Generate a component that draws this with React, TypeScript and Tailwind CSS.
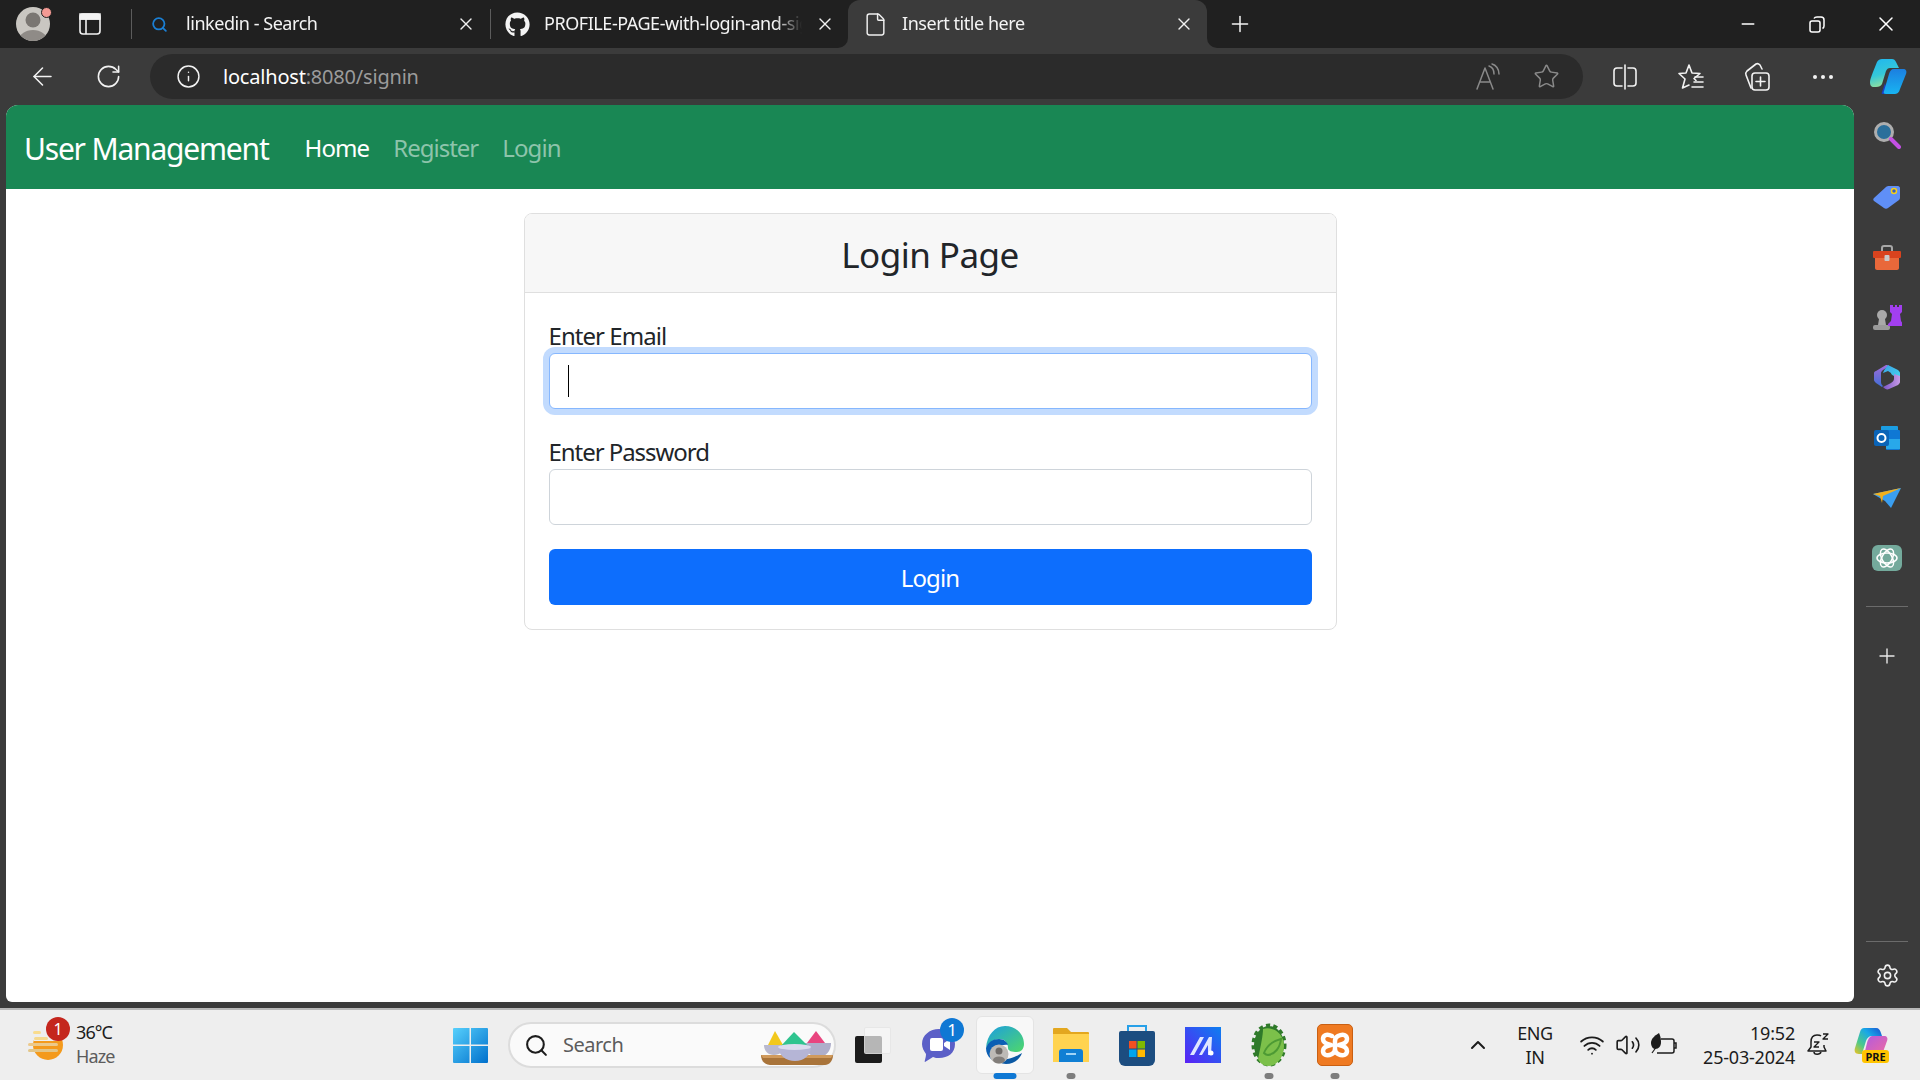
import React from "react";
import { FaGithub } from "react-icons/fa";
import { ArrowLeft, Info, Minus, Plus, RotateCw, Search, Settings, Star, X, ChevronUp, Volume2, Wifi, File } from "lucide-react";

function Slot({ w, children }: { w: string; children?: React.ReactNode }) {
  return <div className={`${w} h-full shrink-0 flex items-center justify-center relative`}>{children}</div>;
}

function Tab({ icon, title, iconW, active }: { icon: React.ReactNode; title: string; iconW: string; active?: boolean }) {
  return (
    <div className={`relative h-full flex items-center ${active ? "w-[359px] bg-[#3b3b3b] rounded-t-[12px]" : "w-[357px]"}`}>
      {active && (
        <>
          <span className="absolute left-[-10px] bottom-0 w-[10px] h-[10px] bg-[#3b3b3b]"><span className="block w-full h-full bg-[#202020] rounded-br-[10px]" /></span>
          <span className="absolute right-[-10px] bottom-0 w-[10px] h-[10px] bg-[#3b3b3b]"><span className="block w-full h-full bg-[#202020] rounded-bl-[10px]" /></span>
        </>
      )}
      <div className={`${iconW} shrink-0 flex justify-center`}>{icon}</div>
      <div className="flex-1 overflow-hidden whitespace-nowrap pb-[2px] text-[18px] tracking-[-0.45px] text-[#f4f4f4] [mask-image:linear-gradient(to_right,black_90%,transparent)]">{title}</div>
      <div className="w-[46px] shrink-0 flex justify-center"><X size={20} strokeWidth={1.6} className="text-[#f0f0f0]" /></div>
    </div>
  );
}

function Profile({ size }: { size: number }) {
  return (
    <svg width={size} height={size} viewBox="0 0 34 34">
      <defs><clipPath id={`pc${size}`}><circle cx="17" cy="17" r="17" /></clipPath></defs>
      <g clipPath={`url(#pc${size})`}>
        <rect width="34" height="34" fill="#c9c6c1" />
        <circle cx="17" cy="13" r="7.5" fill="#7a7672" />
        <ellipse cx="17" cy="33" rx="14" ry="10" fill="#8f8b87" />
      </g>
    </svg>
  );
}

function Copilot({ size }: { size: number }) {
  return (
    <svg width={size} height={size} viewBox="0 0 38 38">
      <defs>
        <linearGradient id="cpa" x1="0" y1="0" x2="0.3" y2="1"><stop offset="0" stopColor="#1fb6f0" /><stop offset="0.6" stopColor="#35c8d8" /><stop offset="1" stopColor="#8fe0a0" /></linearGradient>
        <linearGradient id="cpb" x1="0" y1="0" x2="0" y2="1"><stop offset="0" stopColor="#1c7fe0" /><stop offset="1" stopColor="#18b4f2" /></linearGradient>
      </defs>
      <path d="M16 25l-3 9c-1 2 0 2 2 2h7l-4-3z" fill="#1a3fc4" />
      <path d="M13 1h10c2 0 3 1 4 3l3 6h-9c-2 0-3 1-4 3l-4 13c-1 2-3 3-6 3H5c-3 0-4-2-4-5 0-2 1-5 3-10l4-10c1-2 3-3 5-3z" fill="url(#cpa)" />
      <path d="M25 11h9c3 0 4 2 3 5l-6 15c-1 4-3 5-6 5h-8c-2 0-3-1-2-3l5-17c1-3 2-5 5-5z" fill="url(#cpb)" />
    </svg>
  );
}

function ReadAloud() {
  return (
    <svg width="26" height="28" viewBox="0 0 26 28" fill="none" stroke="#8a8a8a" strokeWidth="1.5" strokeLinecap="round" strokeLinejoin="round">
      <path d="M2 26L10 5l8 21M5 19h10" />
      <path d="M14 3c3 1 5 4 5 8M17 1c4 1 7 5 7 10" />
    </svg>
  );
}

function SplitScreen() {
  return (
    <svg width="24" height="26" viewBox="0 0 24 26" fill="none" stroke="#f2f2f2" strokeWidth="1.6" strokeLinecap="round">
      <path d="M9 4H4a3 3 0 0 0-3 3v12a3 3 0 0 0 3 3h5M15 4h5a3 3 0 0 1 3 3v12a3 3 0 0 1-3 3h-5M12 1v24" />
    </svg>
  );
}

function Favorites() {
  return (
    <svg width="26" height="28" viewBox="0 0 26 28" fill="none" stroke="#f2f2f2" strokeWidth="1.6" strokeLinecap="round" strokeLinejoin="round">
      <path d="M11 2l3 8 8 .5-6 5 2 2M11 2L8 10l-7 .5 6 5.5-2.500 9L11 22" />
      <path d="M17 14h8M16 19h9M14 24h11" />
    </svg>
  );
}

function Collections() {
  return (
    <svg width="26" height="30" viewBox="0 0 26 30" fill="none" stroke="#f2f2f2" strokeWidth="1.6" strokeLinecap="round" strokeLinejoin="round">
      <path d="M7 26L2 13c-1-2 0-3 1-4l9-7c2-1 3 0 4 1l2 4" />
      <rect x="8" y="11" width="17" height="17" rx="3" />
      <path d="M16.500 15v9M12 19.500h9" />
    </svg>
  );
}

function SideIcon({ children, h }: { children: React.ReactNode; h: string }) {
  return <div className={`${h} w-full shrink-0 flex items-center justify-center`}>{children}</div>;
}

function Sidebar() {
  return (
    <div className="w-[66px] h-full flex flex-col items-center pt-[1px]">
      <SideIcon h="h-[60px]">
        <svg width="28" height="30" viewBox="0 0 28 30"><circle cx="11" cy="11" r="8.500" fill="#2b6f9b" stroke="#aeaeae" strokeWidth="3" /><path d="M18 18l8 8" stroke="#c450e4" strokeWidth="4" strokeLinecap="round" /></svg>
      </SideIcon>
      <SideIcon h="h-[62px]">
        <svg width="28" height="26" viewBox="0 0 28 26"><path d="M1 14L13 3c1-1 2-1 3-1h9c1 0 2 1 2 2v9c0 1 0 2-1 3L15 24c-1 1-3 1-4 0L1 17c-1-1-1-2 0-3z" fill="#5f8ff7" /><circle cx="21" cy="7" r="2.500" fill="#3a5fc0" stroke="#f5cf1a" strokeWidth="1.500" /></svg>
      </SideIcon>
      <SideIcon h="h-[60px]">
        <svg width="28" height="26" viewBox="0 0 28 26"><path d="M9 6V3c0-1 1-2 2-2h6c1 0 2 1 2 2v3" fill="none" stroke="#a7a7a7" strokeWidth="2" /><rect x="0" y="6" width="28" height="7" rx="1" fill="#d9431e" /><path d="M2 13h24v10c0 1-1 2-2 2H4c-1 0-2-1-2-2z" fill="#e9683a" /><rect x="11.500" y="10" width="5" height="6" rx="1" fill="#c9c9c9" /></svg>
      </SideIcon>
      <SideIcon h="h-[58px]">
        <svg width="30" height="28" viewBox="0 0 30 28"><circle cx="10" cy="12" r="5" fill="#a9a9a9" /><path d="M7 16h6l1 6H6z" fill="#a9a9a9" /><rect x="1" y="22" width="17" height="5" rx="2" fill="#9a9a9a" /><path d="M18 2h3v2h2V2h2v2h2V2h3v7l-2 2 1 7 2 3v2H16v-2l3-3 1-7-2-2z" fill="#a23ff0" /></svg>
      </SideIcon>
      <SideIcon h="h-[62px]">
        <svg width="26" height="26" viewBox="0 0 26 26">
          <defs>
            <linearGradient id="of1" x1="0" y1="0" x2="0" y2="1"><stop offset="0" stopColor="#a26bd8" /><stop offset="1" stopColor="#3f6fd8" /></linearGradient>
            <linearGradient id="of2" x1="0" y1="0" x2="1" y2="1"><stop offset="0" stopColor="#3aa0e8" /><stop offset="1" stopColor="#46d6ec" /></linearGradient>
            <linearGradient id="of3" x1="0" y1="0" x2="1" y2="0"><stop offset="0" stopColor="#7b55c8" /><stop offset="1" stopColor="#c79ae6" /></linearGradient>
          </defs>
          <path d="M2 7l10-6c1 0 2 0 3 1L9 6c-1 1-2 2-2 3v9c0 2 1 3 2 4l-1 1-6-4c-1-1-2-2-2-3V9c0-1 1-2 2-2z" fill="url(#of1)" />
          <path d="M14 1l10 5c1 1 2 2 2 3v6l-6-3c-2-1-3-2-3-3l-3-2-5 2c1-3 3-6 5-8z" fill="url(#of2)" />
          <path d="M26 12v6c0 1-1 2-2 3l-9 4c-2 1-4 0-6-2l8-4c1-1 3-2 3-4v-5z" fill="url(#of3)" />
        </svg>
      </SideIcon>
      <SideIcon h="h-[60px]">
        <svg width="26" height="24" viewBox="0 0 26 24"><rect x="7" y="0" width="17" height="12" rx="1" fill="#1b9de2" /><rect x="12" y="4" width="14" height="20" rx="1" fill="#0f78d4" /><path d="M12 13l14 0v10H12z" fill="#28a8ea" /><rect x="0" y="4" width="15" height="16" rx="2" fill="#0a64b8" /><circle cx="7.500" cy="12" r="4" fill="none" stroke="#fff" strokeWidth="2" /></svg>
      </SideIcon>
      <SideIcon h="h-[60px]">
        <svg width="28" height="20" viewBox="0 0 28 20"><path d="M0 6l28-6-10 20-6-7z" fill="#3a9eef" /><path d="M0 6l28-6-18 8-1 7-2-7z" fill="#f2b01c" /></svg>
      </SideIcon>
      <SideIcon h="h-[60px]">
        <div className="w-[30px] h-[26px] rounded-[6px] bg-[#74aa9c] flex items-center justify-center">
          <svg width="24" height="24" viewBox="0 0 24 24" fill="none" stroke="#fff" strokeWidth="1.500">
            <ellipse cx="12" cy="12" rx="10" ry="5" />
            <ellipse cx="12" cy="12" rx="10" ry="5" transform="rotate(60 12 12)" />
            <ellipse cx="12" cy="12" rx="10" ry="5" transform="rotate(120 12 12)" />
          </svg>
        </div>
      </SideIcon>
      <div className="w-[42px] h-px bg-[#6b6b6b] mt-[18px] mb-[37px]" />
      <Plus size={24} strokeWidth={1.4} className="text-[#e8e8e8]" />
      <div className="flex-1" />
      <div className="w-[42px] h-px bg-[#6b6b6b]" />
      <div className="h-[66px] flex items-center"><Settings size={25} strokeWidth={1.5} className="text-[#f2f2f2]" /></div>
    </div>
  );
}

function Holi() {
  return (
    <svg width="72" height="34" viewBox="0 0 72 34">
      <path d="M7 14L14 0l8 14z" fill="#f2c81c" />
      <path d="M46 12L55 0l9 12z" fill="#e8457f" />
      <path d="M3 14h20c0 6-4 10-10 10S3 20 3 14z" fill="#b9b9cf" />
      <path d="M44 12h26c0 8-5 14-13 14s-13-6-13-14z" fill="#aeaeca" />
      <path d="M0 24h72c0 6-4 10-8 10H9c-5 0-9-4-9-10z" fill="#a9743a" />
      <path d="M0 24h72l-2 3H2z" fill="#d09a5c" />
      <path d="M19 16L33 1l15 15z" fill="#2fc48f" />
      <path d="M17 15h33c0 9-7 15-16 15S17 24 17 15z" fill="#b5b5d6" />
      <ellipse cx="33.500" cy="16" rx="16.500" ry="3" fill="#dcdcee" />
    </svg>
  );
}

function Bar({ w, children }: { w: string; children?: React.ReactNode }) {
  return <div className={`${w} h-full shrink-0 flex items-center justify-center relative`}>{children}</div>;
}

function Dot() {
  return <span className="absolute bottom-[1px] left-1/2 -translate-x-1/2 w-[9px] h-[6px] rounded-full bg-[#7d7d7d]" />;
}

function Taskbar() {
  return (
    <div className="h-[70px] bg-[#eeeeee] flex items-center shrink-0">
      <div className="relative w-[76px] h-full shrink-0 flex items-center pl-[28px]">
        <svg width="36" height="36" viewBox="0 0 36 36">
          <circle cx="20" cy="18" r="15" fill="#f49a1c" />
          <rect x="6" y="2" width="24" height="12" fill="#eeeeee" />
          <rect x="5" y="4" width="8" height="3" rx="1.500" fill="#f9dc8e" />
          <rect x="6" y="10" width="14" height="3" rx="1.500" fill="#f5d98e" />
          <rect x="0" y="16" width="30" height="3" rx="1.500" fill="#ecc98a" />
          <rect x="0" y="22" width="30" height="3" rx="1.500" fill="#e3c688" />
        </svg>
        <span className="absolute left-[46px] top-[7px] w-[24px] h-[24px] rounded-full bg-[#c4261d] text-white text-[16px] leading-[24px] text-center">1</span>
      </div>
      <div className="w-[358px] shrink-0 text-[18px] tracking-[-0.9px] leading-[24px] -translate-y-[1px]">
        <div className="text-[#1c1c1c]">36°C</div>
        <div className="text-[#5c5c5c]">Haze</div>
      </div>
      <Bar w="w-[72px]">
        <svg width="35" height="35" viewBox="0 0 35 35">
          <defs>
            <linearGradient id="wn" x1="0" y1="0" x2="1" y2="1"><stop offset="0" stopColor="#57d0fc" /><stop offset="1" stopColor="#0070cc" /></linearGradient>
          </defs>
          <path d="M1 0h15.500v16.500H0V1a1 1 0 0 1 1-1zM18 0h16a1 1 0 0 1 1 1v15.500H18zM0 18h16.500v17H1a1 1 0 0 1-1-1zM18 18h17v16a1 1 0 0 1-1 1H18z" fill="url(#wn)" />
        </svg>
      </Bar>
      <div className="w-[2px] shrink-0" />
      <div className="w-[328px] h-[46px] shrink-0 rounded-full bg-[#fafafa] border-[2px] border-[#dcdcdc] flex items-center relative">
        <Search size={25} strokeWidth={2} className="ml-[14px] text-[#1c1c1c]" />
        <span className="ml-[14px] text-[20px] tracking-[-0.5px] text-[#5c5c5c]">Search</span>
        <div className="absolute right-[1px] bottom-[1px]"><Holi /></div>
      </div>
      <div className="w-[4px] shrink-0" />
      <Bar w="w-[66px]">
        <div className="relative w-[36px] h-[36px]">
          <div className="absolute left-0 bottom-0 w-[27px] h-[27px] rounded-[2px] bg-[#1b1b1b]" />
          <div className="absolute right-0 top-0 w-[27px] h-[27px] rounded-[2px] bg-[#f8f8f8]/70 border border-[#dddddd]/60" />
        </div>
      </Bar>
      <Bar w="w-[66px]">
        <svg width="36" height="38" viewBox="0 0 36 38">
          <path d="M18 3c9 0 16 6 16 15s-7 14-16 14c-2 0-4 0-6-1l-8 5c-1 0 1-4 1-8-2-3-4-6-4-10C1 9 9 3 18 3z" fill="#5b5fc7" />
          <rect x="9" y="12" width="13" height="13" rx="2" fill="#fff" />
          <path d="M23 17l6-4v11l-6-4z" fill="#fff" />
        </svg>
        <span className="absolute left-[34px] top-[8px] w-[24px] h-[24px] rounded-full bg-[#0f78d4] text-white text-[17px] leading-[24px] text-center">1</span>
      </Bar>
      <Bar w="w-[66px]">
        <div className="absolute left-[4px] top-[6px] w-[58px] h-[58px] rounded-[6px] bg-[#f8f8f8] border border-[#e4e4e4]" />
        <svg className="relative" width="38" height="38" viewBox="0 0 38 38">
          <defs>
            <linearGradient id="ed1" x1="0" y1="0" x2="1" y2="1"><stop offset="0" stopColor="#1b9de2" /><stop offset="1" stopColor="#4fd86a" /></linearGradient>
          </defs>
          <path d="M19 0c11 0 19 8 19 18 0 5-3 8-7 8-5 0-9-1-9-4 0-5-3-9-8-9-7 0-12 4-14 9C1 9 9 0 19 0z" fill="url(#ed1)" />
          <path d="M0 22c2-6 7-9 13-9 5 0 8 3 9 6-6-1-13 2-13 9 0 4 2 7 6 9C7 36 0 31 0 22z" fill="#0b5fb4" />
          <path d="M36 27c-2 6-8 11-16 11-5 0-9-3-10-8 4 4 12 6 26-3z" fill="#0c59a4" />
          <circle cx="13" cy="28" r="9.500" fill="#bdbab6" />
          <circle cx="13" cy="25" r="3.500" fill="#6f6b68" />
          <ellipse cx="13" cy="34" rx="6" ry="3.500" fill="#827e7a" />
        </svg>
        <span className="absolute bottom-[1px] left-1/2 -translate-x-1/2 w-[23px] h-[6px] rounded-full bg-[#0f78d4]" />
      </Bar>
      <Bar w="w-[66px]">
        <svg width="36" height="34" viewBox="0 0 36 34">
          <path d="M1 0h13l4 4h17a1 1 0 0 1 1 1v28H0V1a1 1 0 0 1 1-1z" fill="#e3a71f" />
          <rect x="0" y="6" width="36" height="28" fill="#ffd350" />
          <path d="M6 24c0-2 1-3 3-3h18c2 0 3 1 3 3v10H6z" fill="#0f7fd4" />
          <rect x="13" y="25" width="10" height="2" fill="#9fd4f7" />
        </svg>
        <Dot />
      </Bar>
      <Bar w="w-[66px]">
        <svg width="36" height="42" viewBox="0 0 36 42">
          <path d="M9 8V2h18v6" fill="none" stroke="#27a0e8" strokeWidth="2" />
          <path d="M0 9a2 2 0 0 1 2-2h32a2 2 0 0 1 2 2v27a6 6 0 0 1-6 6H6a6 6 0 0 1-6-6z" fill="#1c4d80" />
          <rect x="10" y="17" width="7.500" height="7.500" fill="#f25022" />
          <rect x="18.500" y="17" width="7.500" height="7.500" fill="#7fba00" />
          <rect x="10" y="25.500" width="7.500" height="7.500" fill="#00a4ef" />
          <rect x="18.500" y="25.500" width="7.500" height="7.500" fill="#ffb900" />
        </svg>
      </Bar>
      <Bar w="w-[66px]">
        <svg width="36" height="36" viewBox="0 0 36 36">
          <defs>
            <linearGradient id="mz" x1="0" y1="1" x2="1" y2="0"><stop offset="0" stopColor="#5b21f5" /><stop offset="1" stopColor="#0d7ff0" /></linearGradient>
          </defs>
          <rect width="36" height="36" fill="url(#mz)" />
          <path d="M5 28L15 10h4L9 28zM14 28L24 10h3l-1 18h-3l0-10-6 10z" fill="#dfe6ff" />
          <circle cx="26" cy="26" r="2.500" fill="#fff" />
        </svg>
      </Bar>
      <Bar w="w-[66px]">
        <svg width="36" height="44" viewBox="0 0 36 44">
          <ellipse cx="18" cy="22" rx="15" ry="19" fill="#2f7a2a" stroke="#2f7a2a" strokeWidth="5" strokeDasharray="4 3" />
          <path d="M12 6c10-3 21 4 21 17 0 11-7 20-15 20-6 0-9-3-11-7 3-14 5-24 5-30z" fill="#7cc04a" />
          <path d="M13 30c3-8 9-12 17-14-1 9-6 15-13 16-2 0-3-1-4-2z" fill="none" stroke="#4d9a34" strokeWidth="2" />
        </svg>
        <Dot />
      </Bar>
      <Bar w="w-[66px]">
        <div className="w-[36px] h-[42px] rounded-[5px] bg-[#ef7a22] border border-[#c95f12] flex items-center justify-center">
          <svg width="30" height="30" viewBox="0 0 30 30" fill="none" stroke="#fff" strokeWidth="4.500" strokeLinecap="round" strokeLinejoin="round">
            <path d="M12 6C6 3 3 6 3 9c0 3 3 5 8 6-5 1-8 3-8 6 0 3 3 6 9 3 2-1 3-3 3-5v-8c0-2 1-4 3-5 6-3 9 0 9 3 0 3-3 5-8 6 5 1 8 3 8 6 0 3-3 6-9 3-2-1-3-3-3-5" />
          </svg>
        </div>
        <Dot />
      </Bar>
      <div className="w-[90px] shrink-0" />
      <Bar w="w-[40px]"><ChevronUp size={24} strokeWidth={2} className="text-[#1c1c1c]" /></Bar>
      <Bar w="w-[74px]">
        <div className="text-[18px] leading-[24px] tracking-[-0.5px] text-center text-[#1c1c1c]"><div>ENG</div><div>IN</div></div>
      </Bar>
      <div className="w-[2px] shrink-0" />
      <Bar w="w-[36px]"><Wifi size={26} strokeWidth={1.7} className="text-[#1c1c1c]" /></Bar>
      <Bar w="w-[36px]"><Volume2 size={26} strokeWidth={1.5} className="text-[#1c1c1c]" /></Bar>
      <Bar w="w-[36px]">
        <svg width="26" height="24" viewBox="0 0 26 24" fill="none" stroke="#1c1c1c" strokeWidth="1.500">
          <path d="M10 6h11a2 2 0 0 1 2 2v10a2 2 0 0 1-2 2H6M23 10h2v5h-2" />
          <path d="M8 0C3 3 0 6 0 10c0 3 2 6 4 6 4 0 6-3 6-7 0-4-1-7-2-9z" fill="#1c1c1c" stroke="none" />
          <path d="M6 13l-5 7" strokeWidth="1.200" />
        </svg>
      </Bar>
      <div className="w-[113px] shrink-0 text-right text-[18px] tracking-[-0.2px] leading-[24px] text-[#1c1c1c]">
        <div>19:52</div>
        <div>25-03-2024</div>
      </div>
      <Bar w="w-[46px]">
        <svg width="22" height="24" viewBox="0 0 22 24" fill="none" stroke="#1c1c1c" strokeWidth="1.500" strokeLinejoin="round">
          <path d="M14 3c-1-1-2-1-4-1C6 2 4 5 4 9v5l-3 4h18l-2-4v-2" />
          <path d="M7 19c0 3 6 3 7 0" />
          <path d="M7 9h5l-5 5h5M16 1h5l-5 5h5" strokeWidth="1.300" />
        </svg>
      </Bar>
      <Bar w="w-[60px]">
        <div className="relative w-[34px] h-[36px]">
          <svg width="34" height="28" viewBox="0 0 34 28">
            <defs>
              <linearGradient id="cp2" x1="0" y1="1" x2="1" y2="0"><stop offset="0" stopColor="#f4c21c" /><stop offset="0.3" stopColor="#4dc98a" /><stop offset="0.65" stopColor="#18a7e8" /><stop offset="1" stopColor="#1a4fd0" /></linearGradient>
              <linearGradient id="cp3" x1="0" y1="0" x2="1" y2="1"><stop offset="0" stopColor="#b15be0" /><stop offset="1" stopColor="#f06aa0" /></linearGradient>
            </defs>
            <path d="M10 1h12c3 0 4 2 5 5l1 3H18c-3 0-5 2-6 5l-4 13H5c-4 0-5-3-4-6L6 5c1-3 2-4 4-4z" fill="url(#cp2)" />
            <path d="M18 9h12c3 0 4 2 3 5l-4 11c-1 2-2 3-5 3H10l3-12c1-4 3-7 5-7z" fill="url(#cp3)" />
          </svg>
          <span className="absolute left-[8px] top-[23px] w-[27px] h-[13px] rounded-[3px] bg-[#ffc400] text-[#111] text-[11px] font-bold leading-[13px] text-center">PRE</span>
        </div>
      </Bar>
    </div>
  );
}

export default function App() {
  return (
    <div className="w-[1920px] h-[1080px] overflow-hidden flex flex-col bg-[#3b3b3b] font-['Noto_Sans',sans-serif]">
      <div className="h-[48px] bg-[#202020] flex items-center shrink-0">
        <Slot w="w-[66px]">
          <Profile size={34} />
          <span className="absolute left-[41px] top-[7px] w-[11px] h-[11px] rounded-full bg-[#f49a94] border border-[#202020]" />
        </Slot>
        <Slot w="w-[48px]">
          <svg width="22" height="22" viewBox="0 0 22 22" fill="none" stroke="#f2f2f2" strokeWidth="1.600"><rect x="1" y="1" width="20" height="20" rx="3" /><path d="M1 6h20M7 6v15" /><path d="M1 1h20v5H1z" fill="#f2f2f2" /></svg>
        </Slot>
        <div className="w-[17px] shrink-0" />
        <div className="w-px h-[30px] bg-[#5c5c5c] shrink-0" />
        <Tab iconW="w-[54px]" title="linkedin - Search" icon={<Search size={17} strokeWidth={2.5} className="text-[#1a7fd4]" />} />
        <div className="w-px shrink-0" />
        <div className="w-px h-[30px] bg-[#5c5c5c] shrink-0" />
        <Tab iconW="w-[53px]" title="PROFILE-PAGE-with-login-and-sign-up" icon={<FaGithub size={25} className="text-[#f4f4f4]" />} />
        <Tab active iconW="w-[54px]" title="Insert title here" icon={<File size={25} strokeWidth={1.4} className="text-[#f0f0f0]" />} />
        <Slot w="w-[66px]"><Plus size={26} strokeWidth={1.4} className="text-[#f2f2f2]" /></Slot>
        <div className="flex-1" />
        <Slot w="w-[69px]"><Minus size={20} strokeWidth={1.6} className="text-white" /></Slot>
        <Slot w="w-[69px]">
          <svg width="16" height="17" viewBox="0 0 16 17" fill="none" stroke="#fff" strokeWidth="1.500"><rect x="1" y="5" width="10" height="11" rx="2" /><path d="M5 2.500C5.500 1.500 6.500 1 8 1h4c2 0 3 1 3 3v6c0 1-.5 2-1.500 2.500" /></svg>
        </Slot>
        <Slot w="w-[69px]"><X size={24} strokeWidth={1.5} className="text-white" /></Slot>
      </div>

      <div className="h-[57px] flex items-center shrink-0">
        <Slot w="w-[84px]"><ArrowLeft size={29} strokeWidth={1.3} className="text-[#f2f2f2]" /></Slot>
        <Slot w="w-[48px]"><RotateCw size={27} strokeWidth={1.4} className="text-[#f2f2f2]" /></Slot>
        <div className="w-[18px] shrink-0" />
        <div className="w-[1433px] h-[45px] rounded-full bg-[#2b2b2b] flex items-center shrink-0">
          <Slot w="w-[76px]"><Info size={25} strokeWidth={1.4} className="text-[#f2f2f2]" /></Slot>
          <div className="flex-1 -ml-[3px] text-[20px] tracking-[-0.2px] text-[#9b9b9b]"><span className="text-white">localhost</span>:8080/signin</div>
          <Slot w="w-[59px]"><ReadAloud /></Slot>
          <Slot w="w-[59px]"><Star size={27} strokeWidth={1.3} className="text-[#8a8a8a]" /></Slot>
          <div className="w-[7px] shrink-0" />
        </div>
        <div className="w-[9px] shrink-0" />
        <Slot w="w-[66px]"><SplitScreen /></Slot>
        <Slot w="w-[66px]"><Favorites /></Slot>
        <Slot w="w-[66px]"><Collections /></Slot>
        <Slot w="w-[66px]">
          <div className="flex gap-[4px]"><span className="w-[4px] h-[4px] rounded-full bg-[#f2f2f2]" /><span className="w-[4px] h-[4px] rounded-full bg-[#f2f2f2]" /><span className="w-[4px] h-[4px] rounded-full bg-[#f2f2f2]" /></div>
        </Slot>
        <Slot w="w-[64px]"><Copilot size={38} /></Slot>
      </div>

      <div className="h-[903px] flex shrink-0">
        <div className="w-[6px] shrink-0" />
        <div className="w-[1848px] h-[897px] bg-white rounded-t-[12px] rounded-b-[6px] overflow-hidden shrink-0">
          <nav className="h-[84px] bg-[#198754] flex items-center pl-[18px] pt-[2px]">
            <span className="text-[30px] tracking-[-1.2px] text-white">User Management</span>
            <span className="ml-[36px] text-[24px] tracking-[-0.9px] text-white">Home</span>
            <span className="ml-[24px] text-[24px] tracking-[-1px] text-[#8dc4ab]">Register</span>
            <span className="ml-[24px] text-[24px] tracking-[-0.9px] text-[#8dc4ab]">Login</span>
          </nav>
          <div className="pt-[24px] flex justify-center text-[#212529]">
            <div className="w-[813px] h-[417px] border border-[#dfdfdf] rounded-[8px] overflow-hidden">
              <div className="h-[79px] bg-[#f7f7f7] border-b border-[#dfdfdf] flex items-center justify-center pt-[4px] text-[35px] tracking-[-0.55px]">Login Page</div>
              <div className="p-[24px]">
                <label className="block h-[36px] leading-[38px] text-[24px] tracking-[-0.95px]">Enter Email</label>
                <div className="relative">
                  <input readOnly className="block w-full h-[56px] rounded-[6px] bg-white border border-[#86b7fe] shadow-[0_0_0_6px_#c2dbfe] outline-none" />
                  <span className="absolute left-[19px] top-[12px] w-px h-[32px] bg-black" />
                </div>
                <label className="block mt-[24px] h-[36px] leading-[38px] text-[24px] tracking-[-1.05px]">Enter Password</label>
                <input readOnly type="password" className="block w-full h-[56px] rounded-[6px] bg-white border border-[#ced4da] outline-none" />
                <button className="block w-full h-[56px] mt-[24px] pt-[2px] rounded-[6px] bg-[#0d6efd] text-white text-[24px] tracking-[-0.9px]">Login</button>
              </div>
            </div>
          </div>
        </div>
        <Sidebar />
      </div>
      <div className="h-[2px] bg-[#b8b8b8] shrink-0" />
      <Taskbar />
    </div>
  );
}
